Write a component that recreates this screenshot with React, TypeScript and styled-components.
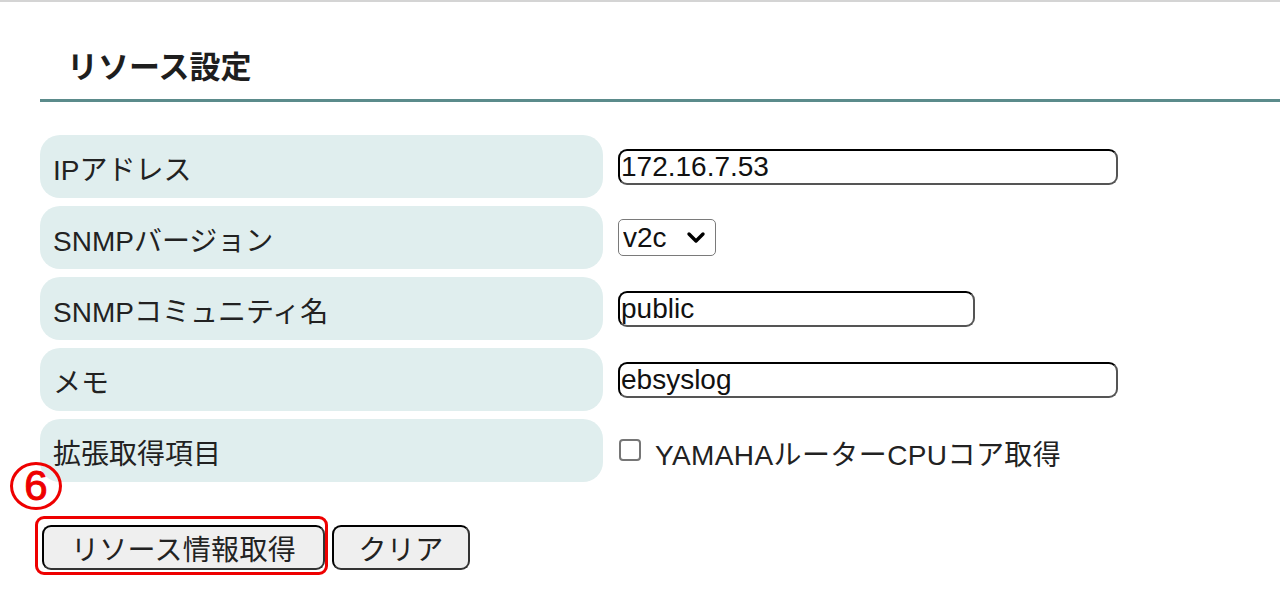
import React from "react";
import styled, { createGlobalStyle } from "styled-components";

const GlobalStyle = createGlobalStyle`
  html, body {
    margin: 0;
    padding: 0;
    background: #ffffff;
  }
  body {
    font-family: "Liberation Sans", "Noto Sans CJK JP", sans-serif;
    color: #222222;
  }
`;

const Page = styled.div`
  border-top: 2px solid #d4d4d4;
  min-height: 605px;
  box-sizing: border-box;
`;

const Section = styled.section`
  margin-left: 40px;
`;

const Heading = styled.h2`
  margin: 0;
  padding: 46px 0 11px 27px;
  font-size: 31px;
  line-height: 40px;
  font-weight: 700;
  color: #1e1e1e;
  border-bottom: 3px solid #5b8b8b;
`;

const FormGrid = styled.div`
  display: grid;
  grid-template-columns: 563px 1fr;
  column-gap: 15px;
  row-gap: 8px;
  margin-top: 33px;
`;

const LabelCell = styled.div`
  height: 63px;
  box-sizing: border-box;
  display: flex;
  align-items: center;
  padding: 2px 0 0 13px;
  background: #e0eeee;
  border-radius: 20px;
  font-size: 28px;
  color: #222222;
`;

const FieldCell = styled.div`
  display: flex;
  align-items: center;
`;

const TextInput = styled.input<{ $w: number }>`
  width: ${(p) => p.$w}px;
  height: 36px;
  box-sizing: border-box;
  border: 2px solid;
  border-color: #000000 #555555 #555555 #000000;
  border-radius: 9px;
  padding: 0 1px;
  font-family: "Liberation Sans", "Noto Sans CJK JP", sans-serif;
  font-size: 28px;
  color: #111111;
  background: #ffffff;
  outline: none;
`;

const SelectWrap = styled.div`
  position: relative;
  display: inline-flex;
`;

const Select = styled.select`
  appearance: none;
  -webkit-appearance: none;
  width: 98px;
  height: 37px;
  box-sizing: border-box;
  border: 1px solid #7a7a7a;
  border-radius: 5px;
  background: #ffffff;
  padding: 0 0 0 4px;
  font-family: "Liberation Sans", sans-serif;
  font-size: 28px;
  color: #111111;
  outline: none;
`;

const Chevron = styled.svg`
  position: absolute;
  right: 10px;
  top: 12px;
  pointer-events: none;
`;

const CheckLabel = styled.label`
  display: flex;
  align-items: center;
  gap: 14px;
  font-size: 28px;
  letter-spacing: 0.4px;
  color: #222222;
  margin-top: 4px;
`;

const Checkbox = styled.input`
  appearance: none;
  -webkit-appearance: none;
  width: 22px;
  height: 22px;
  margin: 0 0 6px 1px;
  box-sizing: border-box;
  border: 2px solid #767676;
  border-radius: 4px;
  background: #ffffff;
`;

const Actions = styled.div`
  position: relative;
  display: flex;
  align-items: flex-start;
  gap: 4px;
  margin: 34px 0 0 35px;
`;

const Highlight = styled.div`
  border: 3px solid #ee0000;
  border-radius: 9px;
  padding: 6px 0 2px 4px;
  display: flex;
`;

const Badge = styled.div`
  position: absolute;
  left: -25px;
  top: -54px;
  width: 52px;
  height: 48px;
  box-sizing: border-box;
  border: 3px solid #ee0000;
  border-radius: 50%;
  display: flex;
  align-items: center;
  justify-content: center;
  font-family: "Liberation Sans", sans-serif;
  font-size: 42px;
  font-weight: 400;
  line-height: 1;
  color: #ee0000;
  -webkit-text-stroke: 1px #ee0000;
`;

const Button = styled.button<{ $w: number }>`
  width: ${(p) => p.$w}px;
  height: 45px;
  box-sizing: border-box;
  border: 2px solid;
  border-color: #000000 #333333 #333333 #000000;
  border-radius: 9px;
  background: #efefef;
  font-family: "Liberation Sans", "Noto Sans CJK JP", sans-serif;
  font-size: 28px;
  letter-spacing: 0.3px;
  color: #222222;
  padding: 0;
  display: flex;
  align-items: center;
  justify-content: center;
`;

const PlainSlot = styled.div`
  padding-top: 9px;
`;

export default function App() {
  return (
    <Page>
      <GlobalStyle />
      <Section>
        <Heading>リソース設定</Heading>
        <FormGrid>
          <LabelCell>IPアドレス</LabelCell>
          <FieldCell>
            <TextInput $w={500} defaultValue="172.16.7.53" />
          </FieldCell>

          <LabelCell>SNMPバージョン</LabelCell>
          <FieldCell>
            <SelectWrap>
              <Select defaultValue="v2c">
                <option value="v1">v1</option>
                <option value="v2c">v2c</option>
              </Select>
              <Chevron width="20" height="14" viewBox="0 0 20 14">
                <path d="M3 3 L10 10 L17 3" fill="none" stroke="#000" strokeWidth="3.4" strokeLinecap="round" strokeLinejoin="round" />
              </Chevron>
            </SelectWrap>
          </FieldCell>

          <LabelCell>SNMPコミュニティ名</LabelCell>
          <FieldCell>
            <TextInput $w={357} defaultValue="public" />
          </FieldCell>

          <LabelCell>メモ</LabelCell>
          <FieldCell>
            <TextInput $w={500} defaultValue="ebsyslog" />
          </FieldCell>

          <LabelCell>拡張取得項目</LabelCell>
          <FieldCell>
            <CheckLabel>
              <Checkbox type="checkbox" />
              YAMAHAルーターCPUコア取得
            </CheckLabel>
          </FieldCell>
        </FormGrid>
      </Section>
      <Actions>
        <Badge>6</Badge>
        <Highlight>
          <Button $w={283}>リソース情報取得</Button>
        </Highlight>
        <PlainSlot>
          <Button $w={138}>クリア</Button>
        </PlainSlot>
      </Actions>
    </Page>
  );
}
